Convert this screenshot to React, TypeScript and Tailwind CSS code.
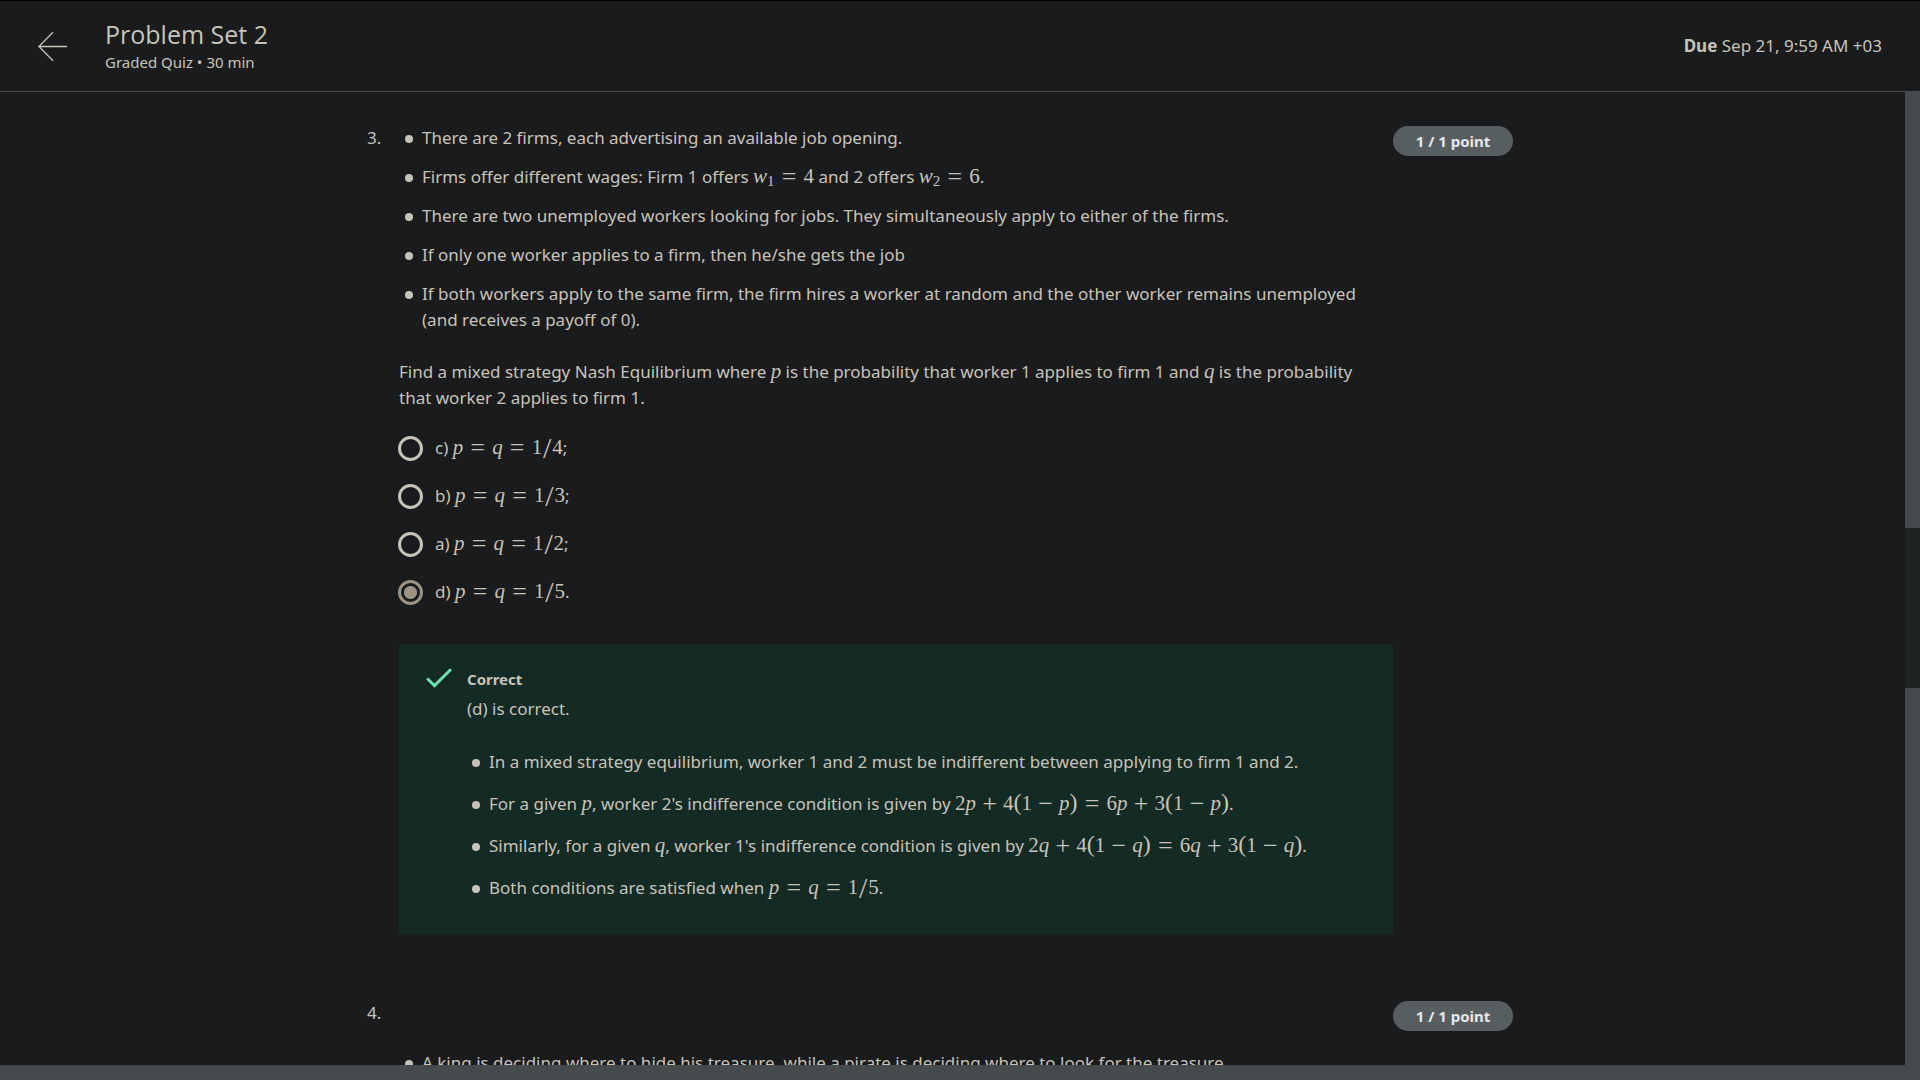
import type { ReactNode } from "react";

function Var({ children }: { children: ReactNode }) {
  return <i className="italic">{children}</i>;
}

function Sub({ children }: { children: ReactNode }) {
  return <span className="align-[-3px] text-[15px] leading-none">{children}</span>;
}

/* Relation sign such as "=" */
function Rel({ children }: { children: ReactNode }) {
  return (
    <span className="mx-[6px] inline-block w-[17px] text-center align-[-2px] text-[26px] leading-5">{children}</span>
  );
}

/* Binary operator such as "+" */
function Bin({ children }: { children: ReactNode }) {
  return (
    <span className="mx-[5px] inline-block w-[17px] text-center align-[-2px] text-[26px] leading-5">{children}</span>
  );
}

function Slash() {
  return <span className="inline-block w-[10px] text-center align-[-4px] text-[30px] leading-5">/</span>;
}

function Paren({ children }: { children: ReactNode }) {
  return <span className="inline-block w-2 text-center text-[24px] leading-5">{children}</span>;
}

function Formula({ children }: { children: ReactNode }) {
  return (
    <span className="font-['Liberation_Serif',serif] text-[21px] leading-5 whitespace-nowrap">{children}</span>
  );
}

function Equal({ denominator }: { denominator: string }) {
  return (
    <Formula>
      <Var>p</Var>
      <Rel>=</Rel>
      <Var>q</Var>
      <Rel>=</Rel>1<Slash />
      {denominator}
    </Formula>
  );
}

function Indifference({ name }: { name: string }) {
  return (
    <Formula>
      2<Var>{name}</Var>
      <Bin>+</Bin>4<Paren>(</Paren>1<Bin>−</Bin>
      <Var>{name}</Var>
      <Paren>)</Paren>
      <Rel>=</Rel>6<Var>{name}</Var>
      <Bin>+</Bin>3<Paren>(</Paren>1<Bin>−</Bin>
      <Var>{name}</Var>
      <Paren>)</Paren>
    </Formula>
  );
}

function Bullet({ children }: { children: ReactNode }) {
  return (
    <li className="flex gap-[9px]">
      <span className="mt-[10px] size-2 shrink-0 rounded-full bg-current" />
      <div className="min-w-0">{children}</div>
    </li>
  );
}

function Question({ number, children }: { number: number; children: ReactNode }) {
  return (
    <section className="mx-auto flex w-full max-w-[1171px] items-start">
      <div className="w-8 shrink-0">{number}.</div>
      <div className="min-w-0 flex-1">{children}</div>
      <div className="mt-px mr-[25px] flex h-[30px] w-[120px] shrink-0 items-center justify-center rounded-full bg-[#575e62] text-[15px] font-bold text-[#e8e6e3]">
        1 / 1 point
      </div>
    </section>
  );
}

const options = [
  { letter: "c", denominator: "4", end: ";" },
  { letter: "b", denominator: "3", end: ";" },
  { letter: "a", denominator: "2", end: ";" },
  { letter: "d", denominator: "5", end: "." },
];

export default function App() {
  return (
    <div className="flex h-screen flex-col overflow-hidden bg-[#1a1b1d] font-['Noto_Sans',sans-serif] text-[17px] leading-[26px] text-[#c8c3b9]">
      <header className="flex h-[92px] shrink-0 items-center border-t border-b border-t-black border-b-[#4a4a4a] px-[38px]">
        <button type="button" aria-label="Back" className="mr-[38px]">
          <svg width="29" height="30" viewBox="0 0 29 30" fill="none" stroke="currentColor" strokeWidth="1.3">
            <path d="M15 1.2 0.9 15.5 15 29.8M0.9 15.5H29" />
          </svg>
        </button>
        <div>
          <h1 className="font-['Open_Sans',sans-serif] text-[25px] leading-8">Problem Set 2</h1>
          <p className="text-[15px] leading-6">Graded Quiz • 30 min</p>
        </div>
        <div className="ml-auto">
          <b>Due</b> Sep 21, 9:59 AM +03
        </div>
      </header>

      <div className="flex min-h-0 flex-1">
        <main className="min-w-0 flex-1 overflow-hidden pt-[33px]">
          <Question number={3}>
            <ul className="flex flex-col gap-[13px] pl-[6px]">
              <Bullet>There are 2 firms, each advertising an available job opening.</Bullet>
              <Bullet>
                Firms offer different wages: Firm 1 offers{" "}
                <Formula>
                  <Var>w</Var>
                  <Sub>1</Sub>
                  <Rel>=</Rel>4
                </Formula>{" "}
                and 2 offers{" "}
                <Formula>
                  <Var>w</Var>
                  <Sub>2</Sub>
                  <Rel>=</Rel>6
                </Formula>
                .
              </Bullet>
              <Bullet>
                There are two unemployed workers looking for jobs. They simultaneously apply to either of the firms.
              </Bullet>
              <Bullet>If only one worker applies to a firm, then he/she gets the job</Bullet>
              <Bullet>
                If both workers apply to the same firm, the firm hires a worker at random and the other worker remains
                unemployed (and receives a payoff of 0).
              </Bullet>
            </ul>

            <p id="prompt" className="mt-[26px] pr-6">
              Find a mixed strategy Nash Equilibrium where{" "}
              <Formula>
                <Var>p</Var>
              </Formula>{" "}
              is the probability that worker 1 applies to firm 1 and{" "}
              <Formula>
                <Var>q</Var>
              </Formula>{" "}
              is the probability that worker 2 applies to firm 1.
            </p>

            <div role="radiogroup" aria-labelledby="prompt" className="mt-6 mb-[17px]">
              {options.map((o) => (
                <label key={o.letter} className="-ml-px flex h-12 items-start gap-3">
                  <input
                    type="radio"
                    name="answer"
                    defaultChecked={o.letter === "d"}
                    className="mt-px size-[25px] shrink-0 appearance-none rounded-full border-3 border-[#c8c3b9] checked:border-[#9e9486] checked:bg-[radial-gradient(circle,#9e9486_6px,transparent_7px)]"
                  />
                  <span>
                    {o.letter}) <Equal denominator={o.denominator} />
                    {o.end}
                  </span>
                </label>
              ))}
            </div>

            <div className="flex bg-[#142a24] pt-[22px] pb-[33px] pl-[27px]">
              <svg className="mt-[2px] shrink-0" width="26" height="20" viewBox="0 0 26 20" fill="none">
                <path d="M1.2 10.5 8.5 17.6 25 1.2" stroke="#70dfaf" strokeWidth="3" />
              </svg>
              <div className="pl-[15px]">
                <div className="text-[15px] font-bold">Correct</div>
                <p className="mt-1">(d) is correct.</p>
                <ul className="mt-[27px] flex flex-col gap-4 pl-[5px]">
                  <Bullet>
                    In a mixed strategy equilibrium, worker 1 and 2 must be indifferent between applying to firm 1 and 2.
                  </Bullet>
                  <Bullet>
                    For a given{" "}
                    <Formula>
                      <Var>p</Var>
                    </Formula>
                    , worker 2's indifference condition is given by <Indifference name="p" />.
                  </Bullet>
                  <Bullet>
                    Similarly, for a given{" "}
                    <Formula>
                      <Var>q</Var>
                    </Formula>
                    , worker 1's indifference condition is given by <Indifference name="q" />.
                  </Bullet>
                  <Bullet>
                    Both conditions are satisfied when <Equal denominator="5" />.
                  </Bullet>
                </ul>
              </div>
            </div>
          </Question>

          <div className="h-[66px]" />

          <Question number={4}>
            <ul className="pt-[50px] pl-[6px]">
              <Bullet>
                A king is deciding where to hide his treasure, while a pirate is deciding where to look for the treasure.
              </Bullet>
            </ul>
          </Question>
        </main>
        <div className="flex w-[15px] shrink-0 flex-col bg-[#454a4d]">
          <div className="mt-[436px] h-40 bg-[#202324]" />
        </div>
      </div>
      <div className="h-[15px] shrink-0 bg-[#454a4d]" />
    </div>
  );
}
